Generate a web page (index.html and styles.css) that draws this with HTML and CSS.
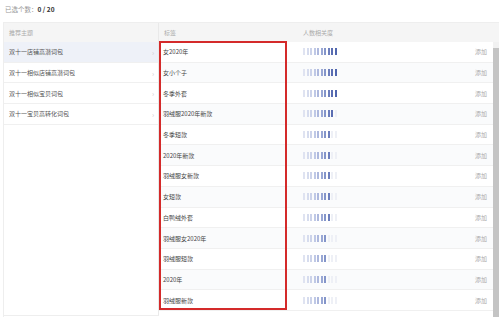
FILE: index.html
```html
<!DOCTYPE html>
<html lang="zh">
<head>
<meta charset="utf-8">
<link rel="stylesheet" href="styles.css">
</head>
<body>
<div class="top">已选个数：<b>0 / 20</b></div>
<div class="panel">
  <div class="left">
    <div class="head">推荐主题</div>
    <div class="item active"><span>双十一店铺高潜词包</span><i class="chev">›</i></div>
    <div class="item"><span>双十一相似店铺高潜词包</span><i class="chev">›</i></div>
    <div class="item"><span>双十一相似宝贝词包</span><i class="chev">›</i></div>
    <div class="item"><span>双十一宝贝高转化词包</span><i class="chev">›</i></div>
  </div>
  <div class="right">
    <div class="head row"><span class="tag">标签</span><span class="rel">人数相关度</span><span class="act"></span></div>
    <div class="rows">
      <div class="row"><span class="tag">女2020年</span><span class="rel"><i class="b b1"></i><i class="b b2"></i><i class="b b3"></i><i class="b b4"></i><i class="b b5"></i><i class="b b6"></i><i class="b b7"></i><i class="b b8"></i><i class="b b9"></i><i class="b b10"></i></span><span class="act">添加</span></div>
      <div class="row"><span class="tag">女小个子</span><span class="rel"><i class="b b1"></i><i class="b b2"></i><i class="b b3"></i><i class="b b4"></i><i class="b b5"></i><i class="b b6"></i><i class="b b7"></i><i class="b b8"></i><i class="b b9"></i><i class="b b10"></i></span><span class="act">添加</span></div>
      <div class="row"><span class="tag">冬季外套</span><span class="rel"><i class="b b1"></i><i class="b b2"></i><i class="b b3"></i><i class="b b4"></i><i class="b b5"></i><i class="b b6"></i><i class="b b7"></i><i class="b b8"></i><i class="b b9"></i><i class="b b10"></i></span><span class="act">添加</span></div>
      <div class="row"><span class="tag">羽绒服2020年新款</span><span class="rel"><i class="b b1"></i><i class="b b2"></i><i class="b b3"></i><i class="b b4"></i><i class="b b5"></i><i class="b b6"></i><i class="b b7"></i><i class="b b8"></i><i class="b b9"></i><i class="b off"></i></span><span class="act">添加</span></div>
      <div class="row"><span class="tag">冬季短款</span><span class="rel"><i class="b b1"></i><i class="b b2"></i><i class="b b3"></i><i class="b b4"></i><i class="b b5"></i><i class="b b6"></i><i class="b b7"></i><i class="b b8"></i><i class="b off"></i><i class="b off"></i></span><span class="act">添加</span></div>
      <div class="row"><span class="tag">2020年新款</span><span class="rel"><i class="b b1"></i><i class="b b2"></i><i class="b b3"></i><i class="b b4"></i><i class="b b5"></i><i class="b b6"></i><i class="b b7"></i><i class="b b8"></i><i class="b off"></i><i class="b off"></i></span><span class="act">添加</span></div>
      <div class="row"><span class="tag">羽绒服女新款</span><span class="rel"><i class="b b1"></i><i class="b b2"></i><i class="b b3"></i><i class="b b4"></i><i class="b b5"></i><i class="b b6"></i><i class="b b7"></i><i class="b b8"></i><i class="b off"></i><i class="b off"></i></span><span class="act">添加</span></div>
      <div class="row"><span class="tag">女短款</span><span class="rel"><i class="b b1"></i><i class="b b2"></i><i class="b b3"></i><i class="b b4"></i><i class="b b5"></i><i class="b b6"></i><i class="b b7"></i><i class="b b8"></i><i class="b off"></i><i class="b off"></i></span><span class="act">添加</span></div>
      <div class="row"><span class="tag">白鸭绒外套</span><span class="rel"><i class="b b1"></i><i class="b b2"></i><i class="b b3"></i><i class="b b4"></i><i class="b b5"></i><i class="b b6"></i><i class="b b7"></i><i class="b b8"></i><i class="b off"></i><i class="b off"></i></span><span class="act">添加</span></div>
      <div class="row"><span class="tag">羽绒服女2020年</span><span class="rel"><i class="b b1"></i><i class="b b2"></i><i class="b b3"></i><i class="b b4"></i><i class="b b5"></i><i class="b b6"></i><i class="b b7"></i><i class="b off"></i><i class="b off"></i><i class="b off"></i></span><span class="act">添加</span></div>
      <div class="row"><span class="tag">羽绒服短款</span><span class="rel"><i class="b b1"></i><i class="b b2"></i><i class="b b3"></i><i class="b b4"></i><i class="b b5"></i><i class="b b6"></i><i class="b b7"></i><i class="b off"></i><i class="b off"></i><i class="b off"></i></span><span class="act">添加</span></div>
      <div class="row"><span class="tag">2020年</span><span class="rel"><i class="b b1"></i><i class="b b2"></i><i class="b b3"></i><i class="b b4"></i><i class="b b5"></i><i class="b b6"></i><i class="b b7"></i><i class="b off"></i><i class="b off"></i><i class="b off"></i></span><span class="act">添加</span></div>
      <div class="row"><span class="tag">羽绒服新款</span><span class="rel"><i class="b b1"></i><i class="b b2"></i><i class="b b3"></i><i class="b b4"></i><i class="b b5"></i><i class="b b6"></i><i class="b b7"></i><i class="b off"></i><i class="b off"></i><i class="b off"></i></span><span class="act">添加</span></div>
      <div class="highlight"></div>
      <div class="scrollbar"><div class="thumb"></div></div>
    </div>
  </div>
</div>
</body>
</html>
```
FILE: styles.css
```css
* { box-sizing: border-box; }
html, body { margin: 0; padding: 0; background: #fff; }
body {
  font-family: "Noto Sans CJK SC", "Noto Sans", sans-serif;
  font-size: 6px;
  color: #555;
  width: 499px;
  height: 317px;
  overflow: hidden;
}
.top {
  height: 22px;
  padding: 5px 0 0 5px;
  color: #999;
  font-size: 6.5px;
  line-height: 8px;
}
.top b { color: #333; font-weight: 700; }
.panel {
  margin-left: 3px;
  display: flex;
  border-top: 1px solid #eee;
  border-left: 1px solid #eee;
  height: 300px;
}
.left {
  width: 155px;
  border-right: 1px solid #e9e9e9;
  border-bottom: 1px solid #eee;
  height: 293px;
}
.head {
  height: 19px;
  background: #f5f5f5;
  color: #aaa;
  display: flex;
  align-items: center;
}
.left .head { padding-left: 5px; }
.item {
  height: 20.7px;
  display: flex;
  align-items: center;
  justify-content: space-between;
  padding: 0 4px 0 5px;
  border-bottom: 1px solid #f0f0f0;
  color: #555;
}
.item.active { background: #eef1f8; }
.chev {
  font-style: normal;
  color: #ccc;
  font-size: 7px;
}
.right {
  flex: 1;
  display: flex;
  flex-direction: column;
}
.row {
  display: flex;
  align-items: center;
  height: 20.7px;
  border-bottom: 1px solid #f0f0f0;
}
.right .head.row { height: 19px; border-bottom: none; color: #aaa; }
.rows { position: relative; padding-right: 6px; }
.rows .row:nth-child(even) { background: #fafbfc; }
.tag { width: 140px; padding-left: 4px; color: #444; }
.head .tag { color: #aaa; padding-left: 5px; }
.head .rel { color: #aaa; }
.rel { flex: 1; display: flex; align-items: center; padding-left: 4px; }
.act { width: 50px; text-align: right; padding-right: 6px; color: #aaa; }
.b {
  display: inline-block;
  width: 2px;
  height: 7px;
  margin-right: 1.5px;
}
.b1 { background: #dfe3f1; }
.b2 { background: #d6dcee; }
.b3 { background: #ccd3ea; }
.b4 { background: #bfc8e5; }
.b5 { background: #aeb9de; }
.b6 { background: #9aa8d5; }
.b7 { background: #8495c9; }
.b8 { background: #6d7fbd; }
.b9 { background: #5a6db2; }
.b10 { background: #5066ae; }
.off { background: #eef0f6; }
.highlight {
  position: absolute;
  left: 0;
  top: -1px;
  width: 128px;
  height: 269px;
  border: 2px solid #d42a2a;
  pointer-events: none;
}
.scrollbar {
  position: absolute;
  right: 0;
  top: 0;
  width: 6px;
  height: 290px;
  background: #f1f1f1;
}
.thumb {
  margin-top: 6px;
  height: 280px;
  background: #c4c4c4;
}
```
